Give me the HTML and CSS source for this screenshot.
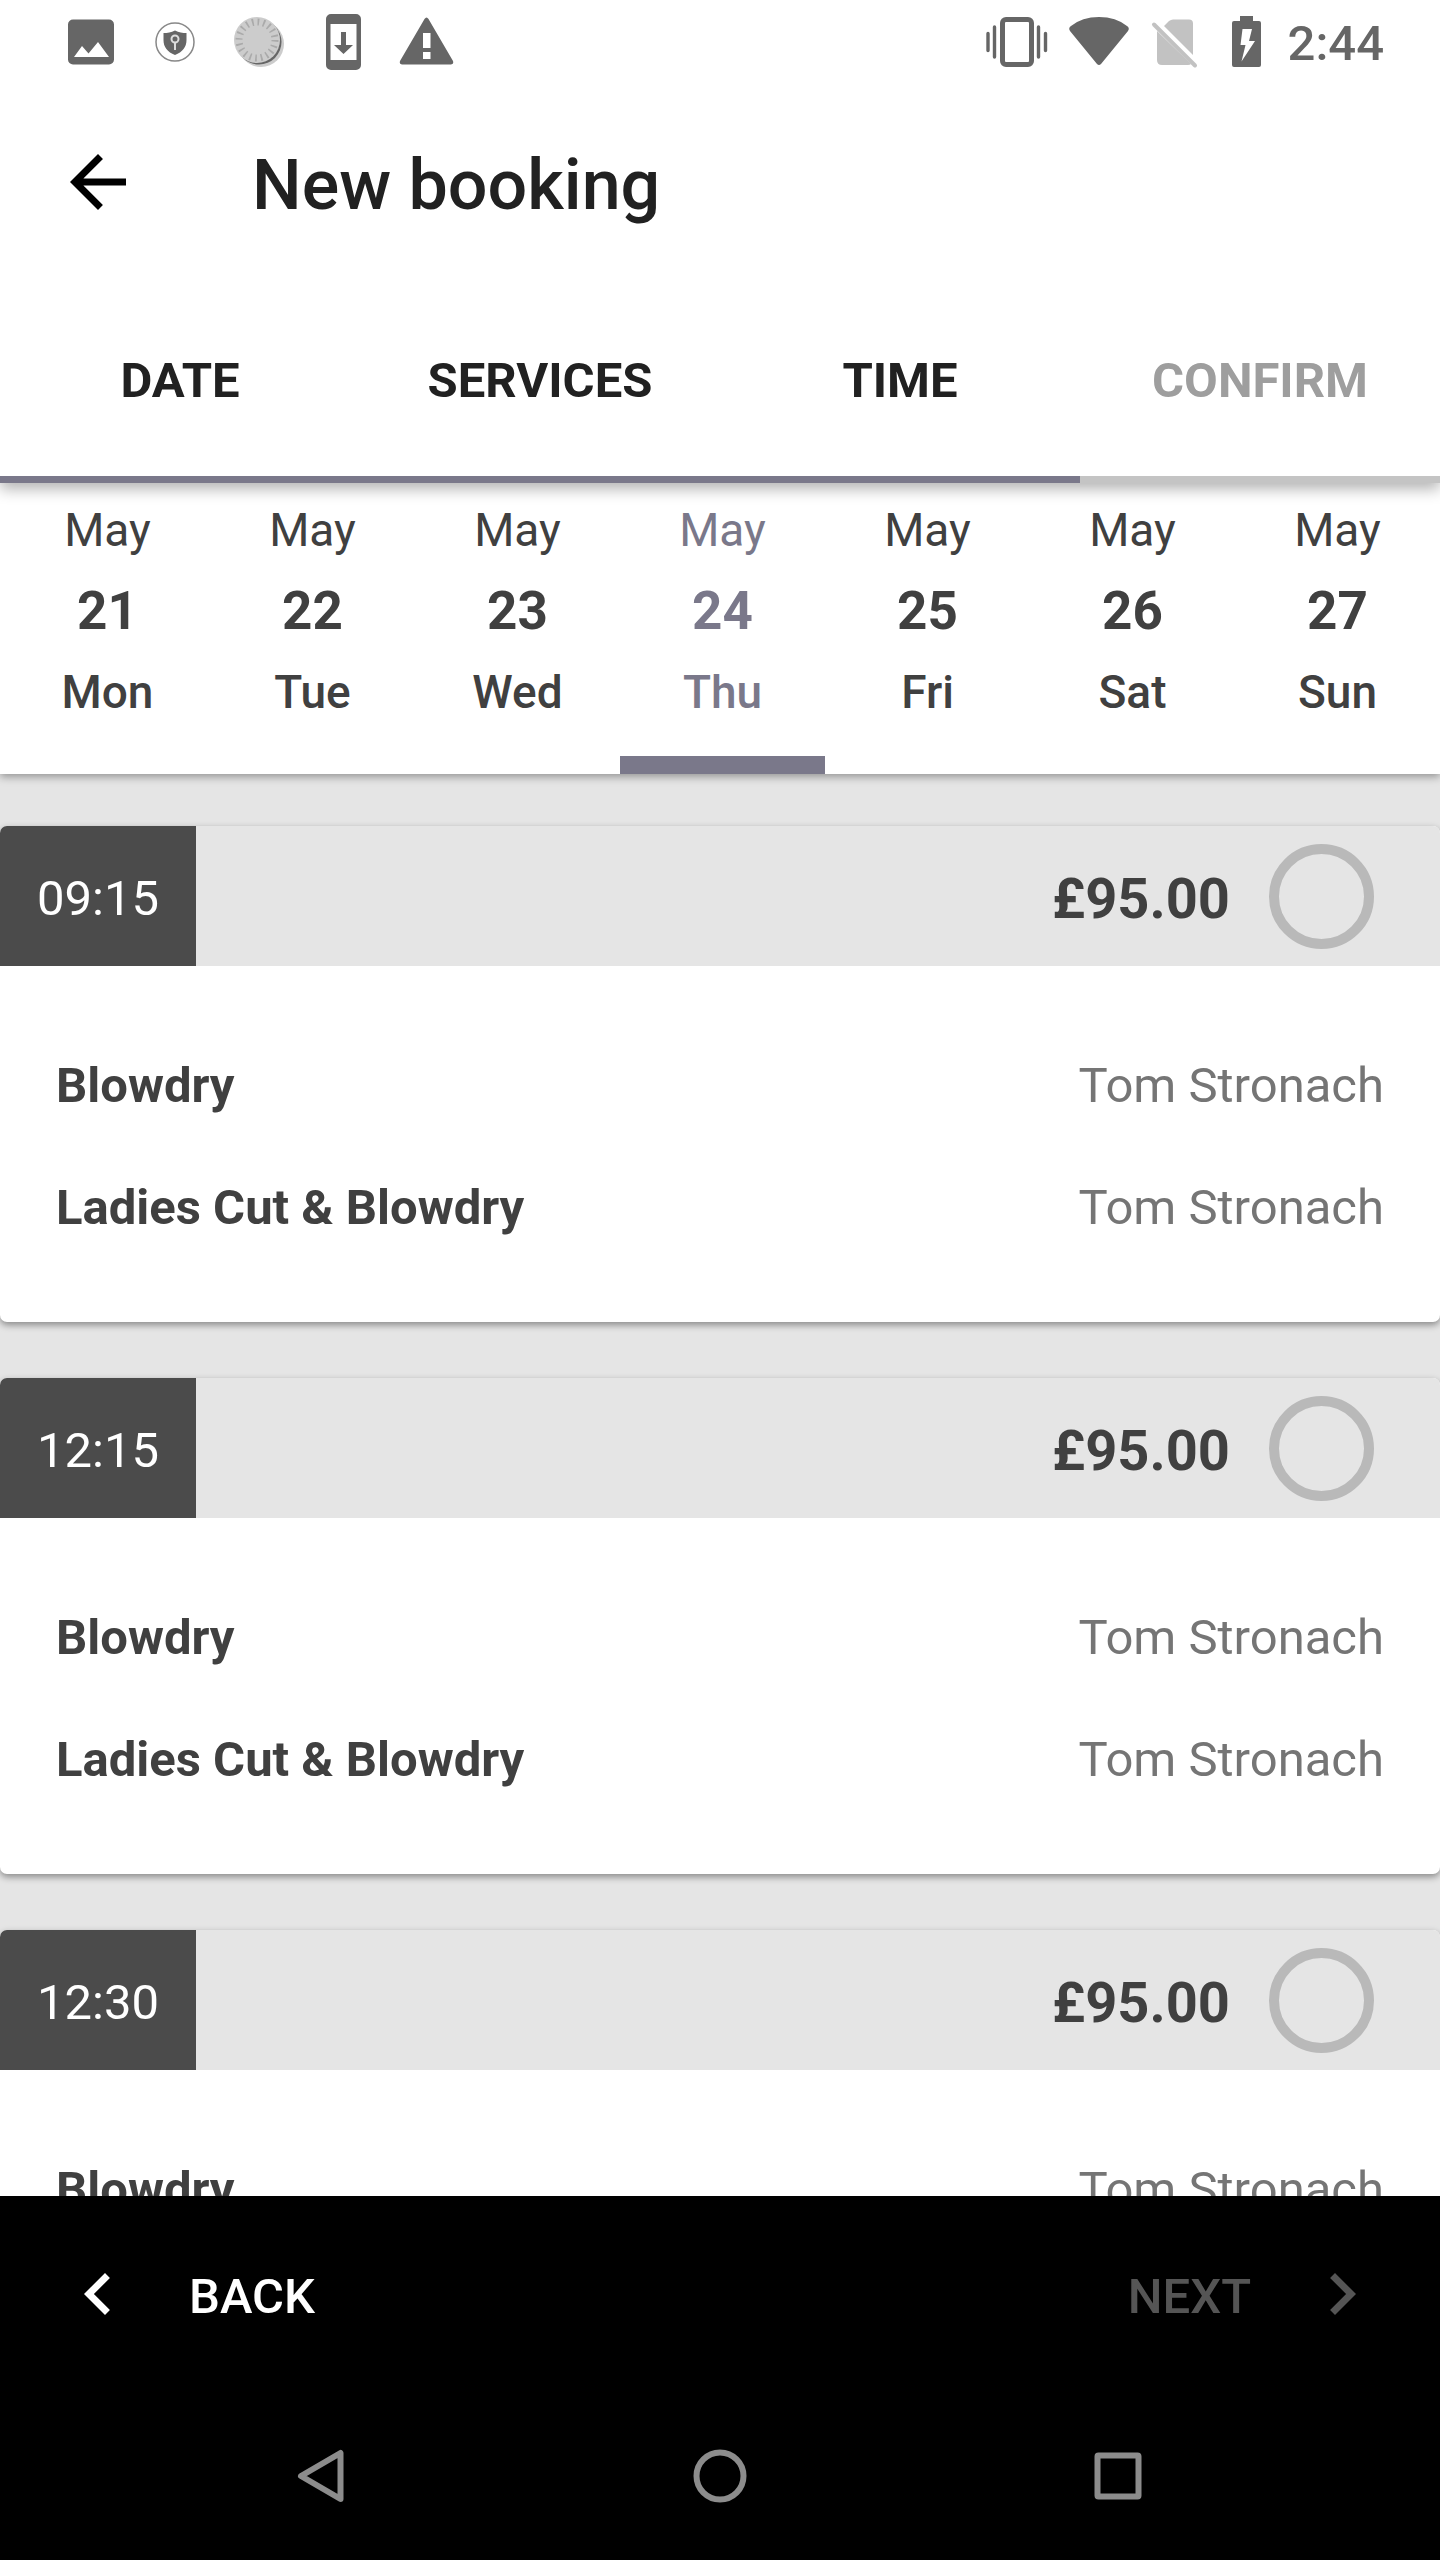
FILE: index.html
```html
<!DOCTYPE html>
<html lang="en">
<head>
  <meta charset="UTF-8">
  <meta name="viewport" content="width=device-width, initial-scale=1.0">
  <title>New booking</title>
  <link rel="stylesheet" href="styles.css">
</head>
<body>
  <div class="status-bar">
    <div class="status-icons">
      <svg width="84" height="84" viewBox="0 0 84 84" fill="#666"><path fill-rule="evenodd" d="M24 19.500h36a5 5 0 0 1 5 5v35a5 5 0 0 1-5 5H24a5 5 0 0 1-5-5v-35a5 5 0 0 1 5-5zM25 57h35L49 42 39.500 53.500 33 46z"/></svg>
      <svg width="84" height="84" viewBox="0 0 84 84">
        <circle cx="42" cy="42" r="19" fill="#fff" stroke="#888" stroke-width="1.500"/>
        <path fill="#666" d="M42 30.500c4 2 7.500 2.500 11.500 2.500v7c0 7-4 12-11.500 15-7.500-3-11.500-8-11.500-15v-7c4 0 7.500-.5 11.500-2.500z"/>
        <circle cx="42" cy="39" r="3.500" fill="#666" stroke="#ddd" stroke-width="2"/>
        <path stroke="#ddd" stroke-width="2" d="M42 43v7"/>
      </svg>
      <svg width="84" height="84" viewBox="0 0 84 84">
        <circle cx="44" cy="44" r="23" fill="#ccc"/>
        <circle cx="42" cy="42" r="22.500" fill="#666"/>
        <circle cx="40" cy="40" r="23" fill="#ccc"/>
        <circle cx="40" cy="40" r="18" fill="none" stroke="#aaa" stroke-width="7" stroke-dasharray="1.700 3.955"/>
      </svg>
      <svg width="84" height="84" viewBox="0 0 84 84" fill="#666"><path fill-rule="evenodd" d="M30 14h25a5 5 0 0 1 5 5v46a5 5 0 0 1-5 5H30a5 5 0 0 1-5-5V19a5 5 0 0 1 5-5zM29.500 24v36h26V24zM40 32h5v13h7L42.500 54 33 45h7z"/></svg>
      <svg width="84" height="84" viewBox="0 0 84 84" fill="#666"><path fill-rule="evenodd" d="M39.500 19q2-3 4 0L68 61q1 3-2 3.500H17q-3-.5-2-3.500zM38 33v15h7.500V33zM38 52v7h7.500v-7z"/></svg>
    </div>
    <div class="status-icons">
      <svg width="80" height="84" viewBox="0 0 80 84" fill="none" stroke="#666" stroke-linecap="round">
        <rect x="25.500" y="19.500" width="29" height="45" rx="3.500" stroke-width="5"/>
        <path stroke-width="3.400" d="M11 33.500v17M17.500 27v30M61.500 27v30M68.500 33.500v17"/>
      </svg>
      <svg width="80" height="84" viewBox="0 0 80 84" fill="#666"><path d="M14 26Q25 17 42 17T70 26q3 2 1 5L44 64q-2 2-4 0L13 31q-2-3 1-5z"/></svg>
      <svg width="72" height="84" viewBox="0 0 72 84">
        <path fill="#c2c2c2" d="M27 26l5-5q2-1.500 4-1.500h16q4 0 4 4V55zM20 31l34 33q-1 1-3 1H25q-5 0-5-5z"/>
        <path stroke="#c2c2c2" stroke-width="4" stroke-linecap="round" d="M17 24.500l41 41"/>
      </svg>
      <svg width="76" height="84" viewBox="0 0 76 84" fill="#666"><path fill-rule="evenodd" d="M31 16h13v5h6q2 0 2 2v42q0 2-2 2H25q-2 0-2-2V23q0-2 2-2h6zM33.500 29l-2 16h5l-4 16.500L46 41h-6l3-12z"/></svg>
      <span class="clock">2:44</span>
    </div>
  </div>

  <header class="toolbar">
    <button class="icon-button" aria-label="Navigate up">
      <svg width="84" height="84" viewBox="0 0 24 24"><path d="M20 11H7.830l5.590-5.590L12 4l-8 8 8 8 1.410-1.410L7.830 13H20v-2z"/></svg>
    </button>
    <h1>New booking</h1>
  </header>

  <nav class="steps">
    <button class="step done">Date</button>
    <button class="step done">Services</button>
    <button class="step done">Time</button>
    <button class="step" disabled>Confirm</button>
  </nav>

  <div class="days">
    <button class="day"><span>May</span><span class="number">21</span><span class="weekday">Mon</span></button>
    <button class="day"><span>May</span><span class="number">22</span><span class="weekday">Tue</span></button>
    <button class="day"><span>May</span><span class="number">23</span><span class="weekday">Wed</span></button>
    <button class="day selected"><span>May</span><span class="number">24</span><span class="weekday">Thu</span></button>
    <button class="day"><span>May</span><span class="number">25</span><span class="weekday">Fri</span></button>
    <button class="day"><span>May</span><span class="number">26</span><span class="weekday">Sat</span></button>
    <button class="day"><span>May</span><span class="number">27</span><span class="weekday">Sun</span></button>
  </div>

  <main class="slots">
    <section class="slot">
      <label class="slot-header">
        <span class="time">09:15</span>
        <span class="price">£95.00</span>
        <input type="radio" name="slot" value="09:15">
      </label>
      <ul class="services">
        <li><b>Blowdry</b><span>Tom Stronach</span></li>
        <li><b>Ladies Cut &amp; Blowdry</b><span>Tom Stronach</span></li>
      </ul>
    </section>
    <section class="slot">
      <label class="slot-header">
        <span class="time">12:15</span>
        <span class="price">£95.00</span>
        <input type="radio" name="slot" value="12:15">
      </label>
      <ul class="services">
        <li><b>Blowdry</b><span>Tom Stronach</span></li>
        <li><b>Ladies Cut &amp; Blowdry</b><span>Tom Stronach</span></li>
      </ul>
    </section>
    <section class="slot">
      <label class="slot-header">
        <span class="time">12:30</span>
        <span class="price">£95.00</span>
        <input type="radio" name="slot" value="12:30">
      </label>
      <ul class="services">
        <li><b>Blowdry</b><span>Tom Stronach</span></li>
      </ul>
    </section>
  </main>

  <footer class="pager">
    <button class="pager-button">
      <svg width="84" height="84" viewBox="0 0 24 24"><path d="M15.410 7.410L14 6l-6 6 6 6 1.410-1.410L10.830 12z"/></svg>
      <span>Back</span>
    </button>
    <button class="pager-button" disabled>
      <span>Next</span>
      <svg width="84" height="84" viewBox="0 0 24 24"><path d="M10 6L8.590 7.410 13.170 12l-4.580 4.590L10 18l6-6z"/></svg>
    </button>
  </footer>

  <nav class="system-nav">
    <button class="icon-button" aria-label="Back">
      <svg width="84" height="84" viewBox="0 0 84 84"><path d="M60.500 19v46L21 42z"/></svg>
    </button>
    <button class="icon-button" aria-label="Home">
      <svg width="84" height="84" viewBox="0 0 84 84"><circle cx="42" cy="42" r="23.500"/></svg>
    </button>
    <button class="icon-button" aria-label="Recent apps">
      <svg width="84" height="84" viewBox="0 0 84 84"><rect x="21.500" y="21.500" width="41" height="41" rx="1"/></svg>
    </button>
  </nav>
</body>
</html>
```
FILE: styles.css
```css
* {
  box-sizing: border-box;
}
body {
  margin: 0;
  height: 100vh;
  display: flex;
  flex-direction: column;
  overflow: hidden;
  font-family: Roboto, sans-serif;
  font-size: 49px;
  line-height: 58px;
  color: #404040;
  background-color: #e5e5e5;
}
button {
  padding: 0;
  border: none;
  background: none;
  font: inherit;
  color: inherit;
  cursor: pointer;
}
svg {
  display: block;
}

/* Status bar */
.status-bar {
  display: flex;
  justify-content: space-between;
  padding: 0 56px 0 49px;
  background-color: #fff;
}
.status-icons {
  display: flex;
  align-items: center;
}
.clock {
  padding: 4px 0 0 3px;
  font-weight: 500;
  color: #666;
}

/* Toolbar */
.toolbar {
  display: flex;
  align-items: center;
  gap: 112px;
  position: relative;
  z-index: 2;
  padding: 56px;
  background-color: #fff;
}
.toolbar h1 {
  margin: 0;
  padding-top: 6px;
  font-size: 70px;
  line-height: 78px;
  font-weight: 500;
  color: #212121;
}

/* Booking steps */
.steps {
  display: grid;
  grid-template-columns: repeat(4, 1fr);
  position: relative;
  z-index: 1;
  background-color: #fff;
  box-shadow: 0 6px 14px rgba(0, 0, 0, 0.3);
}
.step {
  padding: 72px 0 66px;
  border-bottom: 7px solid #c4c4c4;
  font-weight: 700;
  text-transform: uppercase;
  color: #9e9e9e;
}
.step.done {
  border-color: #7a788a;
  color: #212121;
}

/* Day picker */
.days {
  display: grid;
  grid-template-columns: repeat(7, 1fr);
  position: relative;
  padding-left: 5px;
  background-color: #fff;
  box-shadow: 0 3px 8px rgba(0, 0, 0, 0.35);
}
.day {
  display: flex;
  flex-direction: column;
  align-items: center;
  gap: 23px;
  padding: 20px 0 37px;
  border-bottom: 18px solid transparent;
  font-size: 46px;
  line-height: 54px;
}
.day .number {
  font-size: 53px;
  line-height: 62px;
  font-weight: 700;
}
.day .weekday {
  font-weight: 500;
}
.day.selected {
  border-color: #7a788a;
  color: #7a788a;
}

/* Time slots */
.slots {
  flex: 1;
  min-height: 0;
  overflow: hidden;
  display: flex;
  flex-direction: column;
  gap: 56px;
  padding-top: 52px;
}
.slot {
  flex-shrink: 0;
  border-radius: 7px;
  background-color: #fff;
  box-shadow: 0 3px 7px rgba(0, 0, 0, 0.4);
}
.slot-header {
  display: flex;
  align-items: center;
  height: 140px;
  padding-right: 66px;
  border-radius: 7px 7px 0 0;
  background-color: #e5e5e5;
  overflow: hidden;
}
.time {
  width: 196px;
  padding: 44px 0 38px;
  text-align: center;
  color: #fff;
  background-color: #4b4b4b;
}
.price {
  margin-left: auto;
  padding-top: 6px;
  font-size: 56px;
  font-weight: 700;
}
.slot-header input {
  appearance: none;
  width: 105px;
  height: 105px;
  margin: 0 0 0 39px;
  border: 10px solid #b9b9b9;
  border-radius: 50%;
}
.slot-header input:checked {
  border-color: #7a788a;
}
.services {
  display: flex;
  flex-direction: column;
  gap: 64px;
  margin: 0;
  padding: 91px 56px 85px;
  list-style: none;
}
.services li {
  display: flex;
  justify-content: space-between;
}
.services span {
  color: #757575;
}

/* Bottom bars */
.pager {
  display: flex;
  justify-content: space-between;
  padding: 56px;
  background-color: #000;
}
.pager-button {
  display: flex;
  align-items: center;
  gap: 49px;
  font-weight: 500;
  text-transform: uppercase;
  color: #fff;
}
.pager-button span {
  padding-top: 5px;
}
.pager-button svg {
  fill: currentColor;
}
.pager-button:disabled {
  color: #555;
}
.system-nav {
  display: flex;
  justify-content: center;
  gap: 314px;
  padding: 42px 0;
  background-color: #000;
}
.system-nav svg {
  fill: none;
  stroke: #8c8c8c;
  stroke-width: 6px;
  stroke-linejoin: round;
}
```
